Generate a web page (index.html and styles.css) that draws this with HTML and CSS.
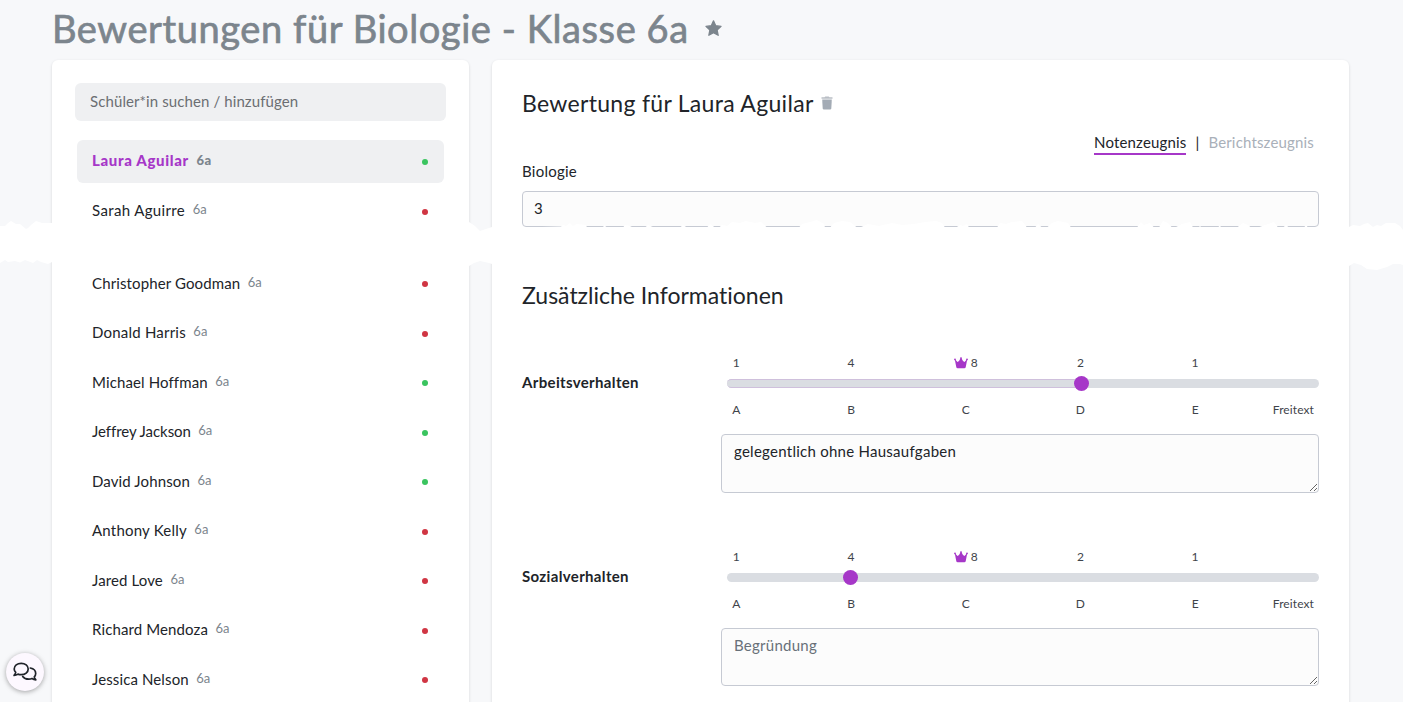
FILE: index.html
```html
<!DOCTYPE html>
<html lang="de">
<head>
<meta charset="utf-8">
<title>Bewertungen für Biologie - Klasse 6a</title>
<link rel="stylesheet" href="styles.css">
</head>
<body>
<header class="page-head">
  <h1>Bewertungen für Biologie - Klasse 6a</h1>
  <svg class="star" viewBox="0 0 16 16"><path d="M8 .8l2.1 4.6 5 .6-3.7 3.4 1 5L8 11.9l-4.400 2.500 1-5L.9 6l5-.6z" fill="#7c858d" stroke="#7c858d" stroke-width="1.200" stroke-linejoin="round"/></svg>
</header>
<main class="columns">
  <aside class="card students">
    <input class="search" placeholder="Schüler*in suchen / hinzufügen">
    <ul class="list">
      <li class="active"><span class="name">Laura Aguilar</span><small>6a</small><i class="dot green"></i></li>
      <li><span class="name wide">Sarah Aguirre</span><small>6a</small><i class="dot"></i></li>
      <li class="after-tear"><span class="name">Christopher Goodman</span><small>6a</small><i class="dot"></i></li>
      <li><span class="name roomy">Donald Harris</span><small>6a</small><i class="dot"></i></li>
      <li><span class="name">Michael Hoffman</span><small>6a</small><i class="dot green"></i></li>
      <li><span class="name snug">Jeffrey Jackson</span><small>6a</small><i class="dot green"></i></li>
      <li><span class="name">David Johnson</span><small>6a</small><i class="dot green"></i></li>
      <li><span class="name roomy">Anthony Kelly</span><small>6a</small><i class="dot"></i></li>
      <li><span class="name">Jared Love</span><small>6a</small><i class="dot"></i></li>
      <li><span class="name">Richard Mendoza</span><small>6a</small><i class="dot"></i></li>
      <li><span class="name">Jessica Nelson</span><small>6a</small><i class="dot"></i></li>
    </ul>
  </aside>
  <section class="card rating">
    <div class="title-row">
      <h2 class="student-title">Bewertung für Laura Aguilar</h2>
      <svg class="trash" viewBox="0 0 12 14"><path d="M.5 1.200h3L4.300.4h3.400l.8.800h3v1.500H.500z" fill="#b9bec5"/><path d="M1.200 3.500h9.600l-.5 8.900q-.1 1.100-1.200 1.100H2.900q-1.100 0-1.200-1.100z" fill="#a3abb5"/></svg>
    </div>
    <nav class="tabs"><a class="on">Notenzeugnis</a><span>|</span><a class="off">Berichtszeugnis</a></nav>
    <label class="subject">Biologie</label>
    <input class="grade" value="3">
    <h2 class="extra">Zusätzliche Informationen</h2>
    <div class="field">
      <b>Arbeitsverhalten</b>
      <div class="control">
        <div class="ticks"><span>1</span><span>4</span><span><svg class="crown" viewBox="0 0 14 12"><path d="M.7 2.100L3.500 5 5 4l2-3.600L9 4l1.500 1 2.800-2.900-1.500 7.700q-.2 1.500-1.500 1.500H3.700q-1.300 0-1.500-1.500z"/><circle cx="1" cy="2.400" r=".9"/><circle cx="7" cy="1.100" r=".9"/><circle cx="13" cy="2.400" r=".9"/></svg>8</span><span>2</span><span>1</span></div>
        <div class="track"><div class="fill" style="width:59.800%"></div><i class="thumb" style="left:59.800%"></i></div>
        <div class="ticks letters"><span>A</span><span>B</span><span>C</span><span>D</span><span>E</span><span class="free">Freitext</span></div>
        <textarea>gelegentlich ohne Hausaufgaben</textarea>
      </div>
    </div>
    <div class="field second">
      <b>Sozialverhalten</b>
      <div class="control">
        <div class="ticks"><span>1</span><span>4</span><span><svg class="crown" viewBox="0 0 14 12"><path d="M.7 2.100L3.500 5 5 4l2-3.600L9 4l1.500 1 2.800-2.900-1.500 7.700q-.2 1.500-1.500 1.500H3.700q-1.300 0-1.500-1.500z"/><circle cx="1" cy="2.400" r=".9"/><circle cx="7" cy="1.100" r=".9"/><circle cx="13" cy="2.400" r=".9"/></svg>8</span><span>2</span><span>1</span></div>
        <div class="track"><i class="thumb" style="left:20.800%"></i></div>
        <div class="ticks letters"><span>A</span><span>B</span><span>C</span><span>D</span><span>E</span><span class="free">Freitext</span></div>
        <textarea placeholder="Begründung"></textarea>
      </div>
    </div>
  </section>
</main>
<svg class="tear" viewBox="0 215 1403 60"><path fill="#fff" d="M0 226L5 226 8 223 11 221 16 224 20 224 26 229 28 228 31 225 36 221 42 223 52 223 469 222 475 226 480 231 486 229 492 227 523 227.500 561 226.500 563 225 566 226 570 223 573 226 577 224 586 225 587 227.500 603 227.500 604 225 607 227.500 623 227.500 625 225 630 226 633 227.500 645 227.500 648 225 654 227.500 680 227.500 683 225 687 227.500 707 227.500 710 224 715 227.500 719 227.500 722 225 727 226 732 222 740 223 746 221 755 223 761 222 767 227.500 799 227.500 802 224 810 222 817 220 824 224 825 227.500 830 227.500 834 223 842 221 850 222 857 227.500 860 227.500 868 224 879 226 892 223 902 225 914 224 925 222 936 221 942 223 945 227.500 956 227.500 960 225 963 226 967 224 969 227.500 997 227.500 1000 223 1006 224 1012 222 1022 221 1027 227.500 1035 227.500 1038 224 1042 227.500 1047 227.500 1052 223 1058 221 1068 223 1071 227.500 1137 227.500 1141 222 1144 225 1150 223 1154 227.500 1159 227.500 1163 221 1168 223 1172 227.500 1175 227.500 1182 224 1190 222 1193 227.500 1199 227.500 1200 225 1201 227.500 1218 227.500 1220 225 1221 227.500 1237 227.500 1243 223 1248 225 1251 227.500 1258 227.500 1265 225 1274 222 1278 227.500 1283 227.500 1286 225 1289 227.500 1304 227.500 1306 225 1308 227.500 1319 228 1349 227 1353 225 1360 226 1364 224 1368 223 1373 227 1377 225 1381 226 1386 223 1395 223 1400 226 1403 230V265L1400 264 1393 264 1387 267 1377 270 1367 269 1361 265 1354 263 1349 266 492 264 489 263 480 261 474 263 469 266 52 262 48 264 41 262 37 260 33 263 25 260 20 262.500 15 261 8 262 5 260 0 263Z"/></svg>
<button class="chat" aria-label="Chat"><svg viewBox="0 0 24 20" fill="none" stroke="#20242a" stroke-width="1.700" stroke-linejoin="round" stroke-linecap="round"><path d="M8.200 1.300c4 0 7 2.500 7 5.700s-3 5.700-7 5.700c-1.200 0-2.300-.2-3.200-.6-1.200.8-2.600 1.300-3.900 1.300.8-.9 1.400-1.900 1.600-3-.9-1-1.500-2.100-1.500-3.400 0-3.200 3-5.700 7-5.700z"/><path d="M17.300 6c3.100.6 5.400 2.900 5.400 5.500 0 1.300-.5 2.400-1.400 3.300.2 1.100.8 2.100 1.500 3-1.400 0-2.700-.5-3.800-1.300-.9.400-2 .6-3.200.6-2.700 0-5-1.100-6.100-2.700"/></svg></button>
</body>
</html>
```
FILE: styles.css
```css
* { box-sizing: border-box; }
body {
  margin: 0;
  height: 702px;
  overflow: hidden;
  background: #f7f8fa;
  color: #212429;
  font: 15px/20px Lato, "Open Sans", sans-serif;
  font-variant-ligatures: none;
}
input, textarea { font: inherit; color: inherit; outline: 0; }
.page-head {
  height: 60px;
  padding-left: 52px;
  display: flex;
  align-items: center;
}
h1 {
  margin: -4px 0 0;
  font-size: 38px;
  line-height: 56px;
  font-weight: 400;
  color: #7c858d;
  -webkit-text-stroke: .7px #7c858d;
  letter-spacing: .58px;
}
.star { width: 17px; height: 17px; margin: -3px 0 0 16px; }
.columns { display: flex; gap: 23px; padding-left: 52px; align-items: flex-start; }
.card {
  height: 660px;
  background: #fff;
  border-radius: 6px;
  box-shadow: 0 1px 3px rgba(0, 0, 0, .14);
}
.students { width: 417px; padding: 23px; }
.search {
  display: block;
  width: 371px;
  height: 38px;
  padding: 0 15px 2px;
  border: 0;
  border-radius: 6px;
  background: #eff0f2;
  letter-spacing: .1px;
}
.search::placeholder { color: #6b6e72; }
.list {
  list-style: none;
  margin: 19px 2px 0;
  padding: 0;
  display: flex;
  flex-direction: column;
  gap: 6.5px;
}
.list li {
  flex: none;
  height: 43px;
  padding: 0 15px;
  display: flex;
  align-items: center;
  border-radius: 6px;
}
.list .after-tear { margin-top: 23.2px; }
.list .active { background: #eff0f2; font-weight: bold; }
.name { margin-top: -2px; letter-spacing: .12px; }
.name.wide { letter-spacing: .36px; }
.name.roomy { letter-spacing: .21px; }
.name.snug { letter-spacing: -.06px; }
.active .name { margin-top: -3px; color: #a637c8; font-weight: 900; letter-spacing: .66px; }
.list small { margin: -4px 0 0 7.5px; font-size: 13px; color: #7c858d; }
.active small { font-weight: 900; letter-spacing: .4px; }
.dot { width: 6px; height: 6px; margin: 1px 1px 0 auto; border-radius: 50%; background: #d03543; }
.dot.green { background: #3ac45f; }
.rating { width: 857px; padding: 27px 30px 0; }
.title-row { display: flex; align-items: center; height: 32px; }
h2 { margin: 0; font-size: 23px; line-height: 32px; font-weight: 400; }
.student-title { letter-spacing: .3px; }
.trash { width: 12px; height: 14px; margin-left: 7px; }
.tabs { display: flex; justify-content: flex-end; gap: 9px; height: 22px; margin: 13px 5px 0 0; letter-spacing: .17px; }
.on { height: 23px; border-bottom: 2px solid #a637c8; }
.off { color: #a9b0b9; }
.subject { display: block; margin-top: 7px; letter-spacing: .25px; }
.grade {
  display: block;
  width: 797px;
  height: 36px;
  margin-top: 10px;
  padding: 0 11px 2px;
  border: 1px solid #c6cad3;
  border-radius: 4px;
  background: #fcfcfc;
}
.extra { margin-top: 52px; }
.field { display: flex; height: 141px; margin-top: 42px; }
.field.second { margin-top: 52.500px; }
.field > b { width: 199px; padding-top: 19px; letter-spacing: .34px; }
.control { flex: 1; }
.ticks {
  display: grid;
  grid-template-columns: repeat(5, 114.700px) 1fr;
  margin: 0 5px 0 -42px;
  height: 20px;
  font-size: 12px;
  text-align: center;
  color: #3f444b;
}
.ticks .free { text-align: right; margin-left: -40px; letter-spacing: .1px; }
.crown { width: 14px; height: 12px; margin-right: 3px; vertical-align: -2px; fill: #a637c8; }
.track {
  position: relative;
  height: 9px;
  margin: 6px 0 0 6px;
  border-radius: 5px;
  background: #dadde2;
}
.fill { height: 9px; border: solid #cfc0dc; border-width: 1px 0; border-radius: 5px 0 0 5px; }
.thumb {
  position: absolute;
  top: -3px;
  width: 15px;
  height: 15px;
  margin-left: -7.500px;
  border-radius: 50%;
  background: #a637c8;
}
.letters { margin-top: 12px; }
textarea {
  display: block;
  width: 598px;
  height: 59px;
  margin-top: 14px;
  padding: 6px 12px;
  border: 1px solid #c6cad3;
  border-radius: 4px;
  background: #fcfcfc;
  resize: both;
  letter-spacing: .26px;
}
.second textarea { height: 58px; }
textarea::placeholder { color: #687079; }
.tear { position: absolute; left: 0; top: 215px; width: 1403px; height: 60px; }
.chat {
  position: absolute;
  left: 6px;
  top: 653px;
  width: 38px;
  height: 38px;
  padding: 0;
  display: flex;
  align-items: center;
  justify-content: center;
  border: 0;
  border-radius: 50%;
  background: #fdf8ff;
  box-shadow: 0 1px 5px rgba(0, 0, 0, .35);
}
.chat svg { width: 24px; height: 20px; }
```
